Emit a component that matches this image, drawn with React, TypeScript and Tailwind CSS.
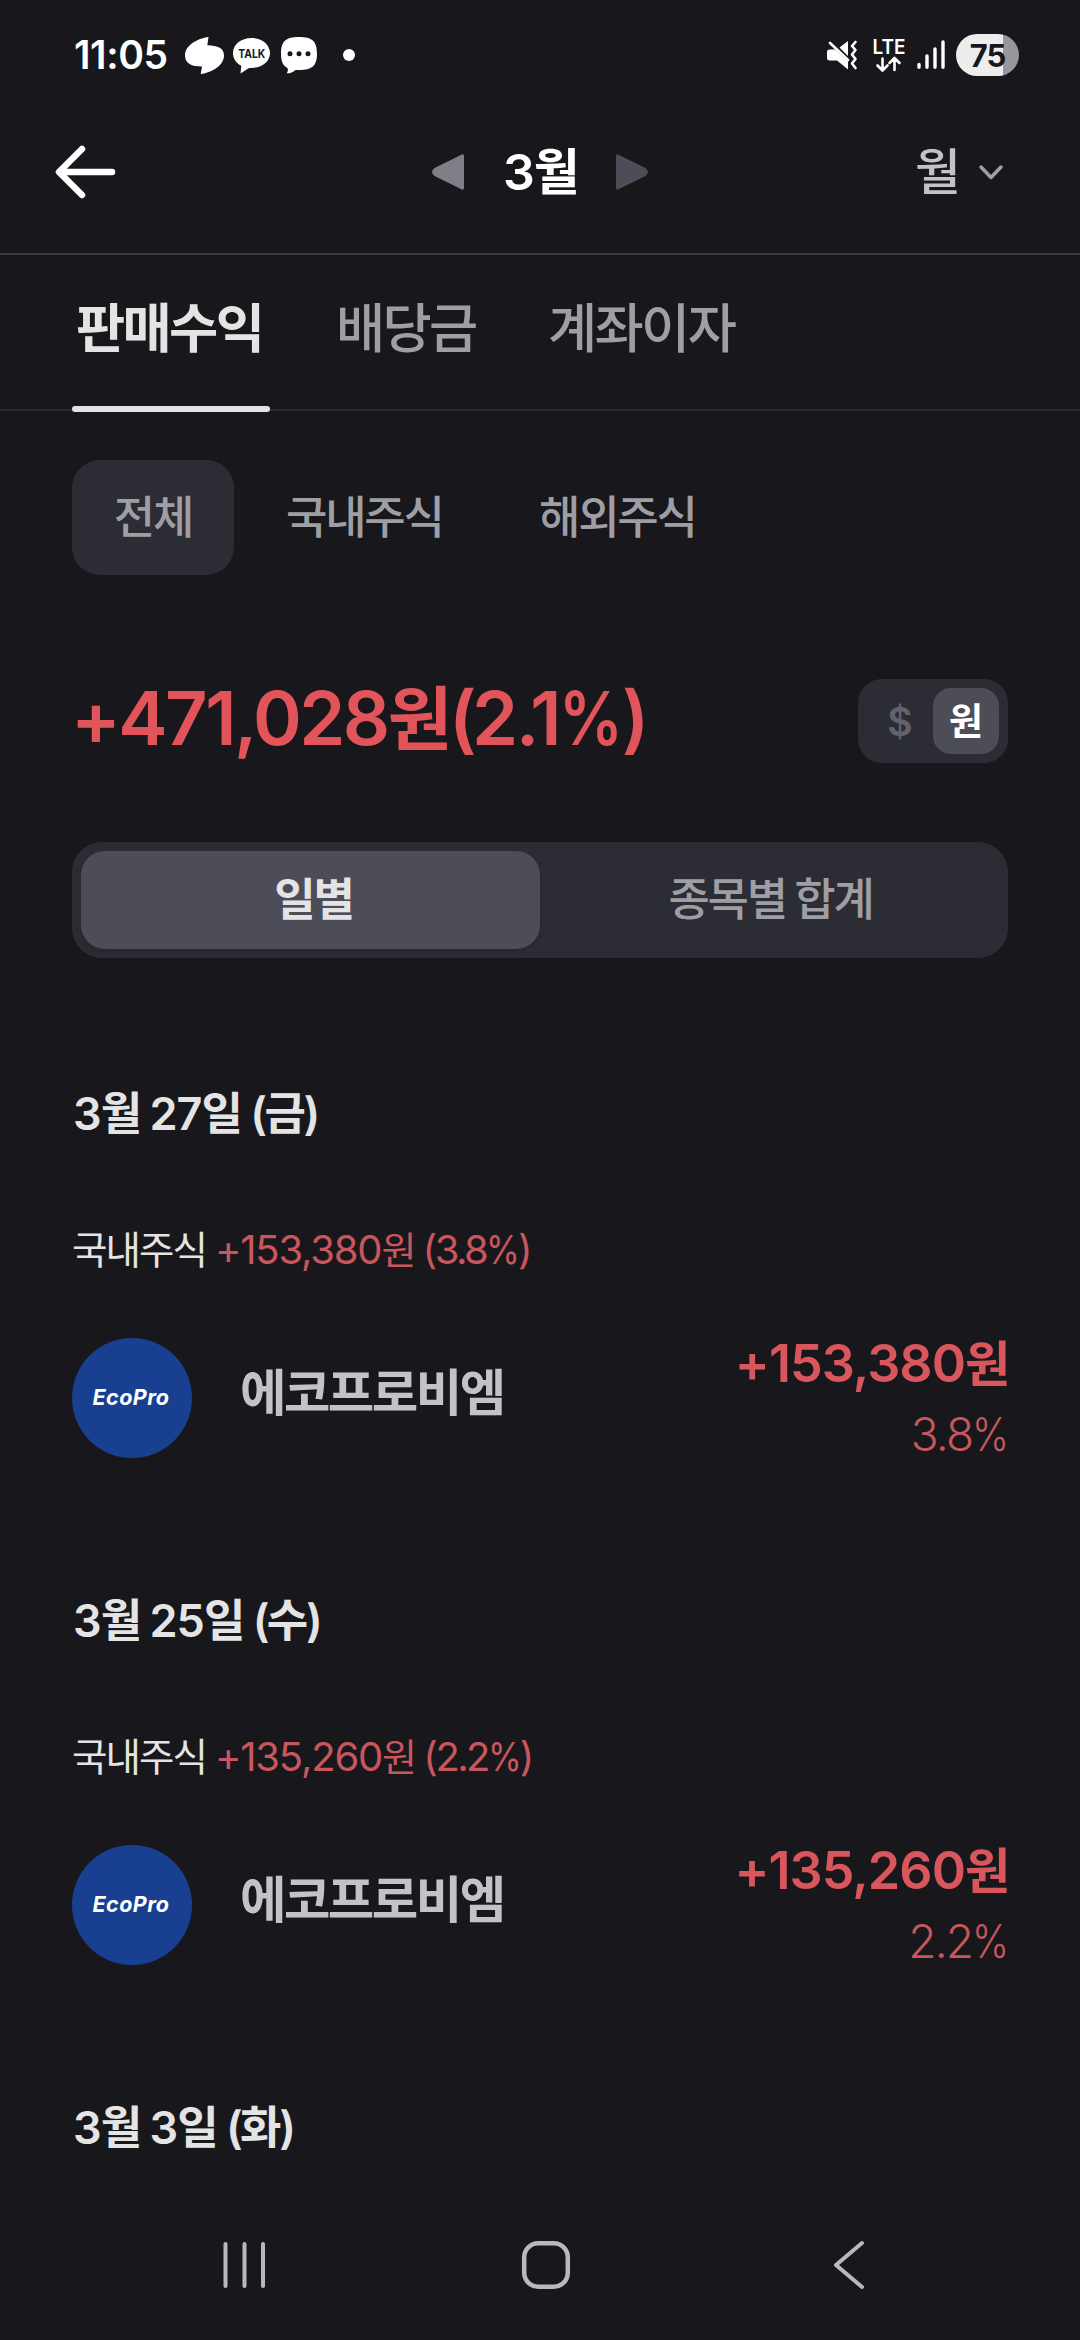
import React from 'react';

const RUNS = /([\uAC00-\uD7A3]+|[()%])/;
const HANGUL = /^[\uAC00-\uD7A3]+$/;

/** Sets Hangul runs and symbols a little tighter than the digits around them. */
function Mixed({ text }: { text: string }) {
  return (
    <span className="whitespace-pre">
      {text.split(RUNS).map((part, i) => {
        if (part === '원') {
          return (
            <span key={i} className="text-[0.95em] tracking-[-0.05em]">
              원
            </span>
          );
        }
        if (HANGUL.test(part)) {
          return (
            <span key={i} className="tracking-[-0.05em]">
              {part}
            </span>
          );
        }
        if (part === '%') {
          return (
            <span key={i} className="-mr-[0.12em] inline-block origin-left scale-x-[0.86]">
              %
            </span>
          );
        }
        if (part === '(' || part === ')') {
          return (
            <span key={i} className="tracking-[-0.06em]">
              {part}
            </span>
          );
        }
        return <React.Fragment key={i}>{part}</React.Fragment>;
      })}
    </span>
  );
}

function StatusBar() {
  return (
    <div className="flex h-[110px] shrink-0 items-start pl-[74px] pr-[61px] text-white">
      <div className="mt-[31px] w-[111px] text-[39px] leading-[48px] font-semibold tracking-[-0.01em]">11:05</div>
      <svg className="mt-[37px] h-[37px] w-[39px]" viewBox="0 0 39 37" fill="currentColor">
        <path d="M23.500 0C12 1.500 0 8.500 0 18.500 0 26.500 6.500 29.500 17 29.500L15.700 37C27.500 35.500 39 28 39 18.500 39 11 33 8.700 22.300 8.300Z" />
      </svg>
      <svg className="mt-[38px] ml-[9px] h-[36px] w-[37px]" viewBox="0 0 37 36">
        <path fill="#fff" d="M18.500 0C29 0 37 6.500 37 15S29 30 18.500 30L16 29.900 7.500 35.500 8.300 27.700C3 25.200 0 20.500 0 15 0 6.500 8 0 18.500 0Z" />
        <text x="18.700" y="19.800" textAnchor="middle" textLength="27" lengthAdjust="spacingAndGlyphs" fontSize="12" fontWeight="700" fontFamily="Inter, sans-serif" fill="#18181c">
          TALK
        </text>
      </svg>
      <svg className="mt-[37px] ml-[11px] h-[37px] w-[36px]" viewBox="0 0 36 37">
        <path fill="#fff" d="M18 0C31 0 36 4 36 16.500S31 33 18 33H14.500C12 35.500 9.500 36.300 5.700 36.300 7 34.500 7.200 33 6.500 31 1.800 28.700 0 24 0 16.500 0 4 5 0 18 0Z" />
        <g fill="#18181c">
          <circle cx="9" cy="16.800" r="2.500" />
          <circle cx="18" cy="16.800" r="2.500" />
          <circle cx="27" cy="16.800" r="2.500" />
        </g>
      </svg>
      <div className="mt-[49px] ml-[26px] size-3 rounded-full bg-white" />

      <svg className="mt-[40px] ml-auto h-[30px] w-[31px]" viewBox="0 0 31 30">
        <path fill="#fff" d="M2.500 9.500H8L21 21.500V29.500L10 20.500H2.500Q0 20.500 0 18V12Q0 9.500 2.500 9.500ZM12.500 7.500 21 1V16Z" />
        <path fill="none" stroke="#fff" strokeWidth="2.600" strokeLinecap="round" d="M3 3 21 20" />
        <path fill="none" stroke="#fff" strokeWidth="2.600" strokeLinecap="round" strokeLinejoin="round" d="M28.500 2 25 6 28.500 10 25 14.500 28.500 19 25 23.500 28.500 28" />
      </svg>
      <svg className="mt-[30px] ml-[12px] h-[44px] w-[38px]" viewBox="0 0 38 44">
        <text x="19" y="24" textAnchor="middle" textLength="33" lengthAdjust="spacingAndGlyphs" fontSize="20.500" fontWeight="600" fontFamily="Inter, sans-serif" fill="#fff">
          LTE
        </text>
        <path fill="none" stroke="#fff" strokeWidth="2.600" strokeLinecap="round" strokeLinejoin="round" d="M12.500 28.500V40M7.500 35.500 12.500 40.500 17.500 35.500M24.500 40V28.500M19.500 33 24.500 28 29.500 33" />
      </svg>
      <svg className="mt-[40px] ml-[9px] h-[30px] w-[28px]" viewBox="0 0 28 30">
        <path fill="none" stroke="#fff" strokeWidth="3.400" strokeLinecap="round" d="M2 24.500V27.300M10 16V27.300M18 9V27.300M26 2V27.300" />
      </svg>
      <div className="mt-[34px] ml-[11px] flex h-[42px] w-[63px] items-center justify-center rounded-full bg-[linear-gradient(90deg,#ededee_75%,#97979b_75%)] text-[31px] leading-none font-bold tracking-[-0.03em] text-[#18181c]">
        75
      </div>
    </div>
  );
}

function Header() {
  return (
    <div className="flex h-[145px] shrink-0 border-b-2 border-[#3a3a43]">
      <svg className="mt-[34px] ml-[54px] h-[56px] w-[62px]" viewBox="0 0 62 56" fill="none" stroke="#fff" strokeWidth="6.500" strokeLinecap="round" strokeLinejoin="round">
        <path d="M28 5 5 28 28 51M6 28H58" />
      </svg>
      <svg className="mt-[44px] ml-[316px] h-[36px] w-[32px]" viewBox="0 0 32 36" fill="#7f7f88">
        <path d="M32 2.500V33.500Q32 37 28.500 34.800L2.500 22Q-2.500 18 2.500 14L28.500 1.200Q32 -1 32 2.500Z" />
      </svg>
      <div className="mt-[29px] ml-[39px] w-[75px] text-[50px] leading-[66px] font-semibold tracking-[-0.02em] whitespace-nowrap text-white">
        <Mixed text="3월" />
      </div>
      <svg className="mt-[44px] ml-[38px] h-[36px] w-[32px]" viewBox="0 0 32 36" fill="#4d4d57">
        <path d="M0 2.500V33.500Q0 37 3.500 34.800L29.500 22Q34.500 18 29.500 14L3.500 1.200Q0 -1 0 2.500Z" />
      </svg>
      <div className="mt-[29px] ml-[267px] w-[49px] text-[50px] leading-[66px] font-medium text-[#c3c3c6]">
        <Mixed text="월" />
      </div>
      <svg className="mt-[52px] ml-[14px] h-[20px] w-[26px]" viewBox="0 0 26 20" fill="none" stroke="#9e9ea4" strokeWidth="3.500" strokeLinecap="round" strokeLinejoin="round">
        <path d="M3 5 13 15.500 23 5" />
      </svg>
    </div>
  );
}

function Tabs() {
  return (
    <div className="flex h-[156px] shrink-0 border-b-2 border-[#2b2b32] pl-[72px] text-[53.5px] leading-[72px] font-medium whitespace-nowrap text-[#9e9ea4]">
      <div className="relative w-[198px] pt-[38px] pl-[4px] font-bold text-[#e4e4e5]">
        <Mixed text="판매수익" />
        <div className="absolute -bottom-[3px] left-0 h-[6px] w-[198px] rounded-sm bg-[#e4e4e5]" />
      </div>
      <div className="ml-[66px] w-[148px] pt-[38px]">
        <Mixed text="배당금" />
      </div>
      <div className="ml-[64px] pt-[38px]">
        <Mixed text="계좌이자" />
      </div>
    </div>
  );
}

function Filters() {
  return (
    <div className="mt-[49px] ml-[72px] flex h-[115px] shrink-0 items-center text-[45px] leading-[60px] font-medium whitespace-nowrap text-[#9e9ea4]">
      <div className="flex h-full w-[162px] items-center justify-center rounded-[28px] bg-[#2c2c35]">
        <Mixed text="전체" />
      </div>
      <div className="ml-[52px] w-[200px]">
        <Mixed text="국내주식" />
      </div>
      <div className="ml-[53px]">
        <Mixed text="해외주식" />
      </div>
    </div>
  );
}

function Summary() {
  return (
    <div className="mt-[104px] flex h-[84px] shrink-0 items-center justify-between pr-[72px] pl-[71px]">
      <div className="-mt-[5px] text-[74px] leading-[84px] font-semibold tracking-[-0.034em] whitespace-nowrap text-[#e15459]">
        <Mixed text="+471,028원(2.1%)" />
      </div>
      <div className="flex h-full w-[150px] items-center rounded-[24px] bg-[#2c2c35] pr-[9px] pl-[9px]">
        <div className="flex-1 text-center text-[39px] leading-none font-semibold text-[#62626c]">$</div>
        <div className="flex h-[66px] w-[66px] items-center justify-center rounded-[18px] bg-[#4d4d57] text-[37px] leading-none font-bold text-white">원</div>
      </div>
    </div>
  );
}

function Segmented() {
  return (
    <div className="mx-[72px] mt-[79px] flex h-[116px] shrink-0 rounded-[30px] bg-[#2c2c35] p-[9px] text-[45px] leading-[60px] whitespace-nowrap">
      <div className="flex w-1/2 items-center justify-center rounded-[24px] bg-[#4d4d57] pl-[6px] font-bold text-[#e4e4e5] shadow-md">
        <Mixed text="일별" />
      </div>
      <div className="flex w-1/2 items-center justify-center pl-[2px] font-medium [word-spacing:-0.08em] text-[#9e9ea4]">
        <Mixed text="종목별 합계" />
      </div>
    </div>
  );
}

function DateTitle({ text }: { text: string }) {
  return (
    <div className="h-[60px] shrink-0 text-[45px] leading-[60px] font-semibold tracking-[-0.02em] [word-spacing:-0.02em] whitespace-nowrap text-[#e4e4e5]">
      <Mixed text={text} />
    </div>
  );
}

type Day = { date: string; amount: string; rate: string };

const DAYS: Day[] = [
  { date: '3월 27일 (금)', amount: '+153,380원', rate: '3.8%' },
  { date: '3월 25일 (수)', amount: '+135,260원', rate: '2.2%' },
];

function DaySection({ date, amount, rate }: Day) {
  return (
    <div className="flex h-[507px] shrink-0 flex-col pr-[72px] pl-[73px]">
      <DateTitle text={date} />
      <div className="mt-[78px] -ml-px flex h-[56px] items-baseline text-[39px] leading-[56px] font-normal tracking-[-0.03em] whitespace-nowrap text-[#e4e4e5]">
        <span className="w-[143px] text-[38.5px]">
          <Mixed text="국내주식" />
        </span>
        <span className="text-[40px] tracking-[-0.03em] text-[#c9565c]">
          <Mixed text={`${amount} `} />
          <span className="-ml-[2px] tracking-[-0.065em]">
            <Mixed text={`(${rate})`} />
          </span>
        </span>
      </div>
      <div className="mt-[60px] -ml-px flex h-[120px]">
        <div className="flex size-[120px] items-center justify-center rounded-full bg-[#193f91] pr-[2px] text-[21.5px] leading-none font-bold tracking-[0.02em] text-white italic">
          EcoPro
        </div>
        <div className="mt-[21px] ml-[48px] text-[50.5px] leading-[68px] font-bold whitespace-nowrap text-[#c3c3c6]">
          <Mixed text="에코프로비엠" />
        </div>
        <div className="-mt-[7px] ml-auto text-right whitespace-nowrap">
          <div className="text-[52px] leading-[66px] font-semibold tracking-[-0.018em] text-[#d9575c]">
            <Mixed text={amount} />
          </div>
          <div className="mt-[7px] text-[46px] leading-[60px] font-light tracking-[-0.04em] text-[#c9565c]">
            <Mixed text={rate} />
          </div>
        </div>
      </div>
    </div>
  );
}

function NavBar() {
  return (
    <div className="mt-auto flex h-[150px] shrink-0 pt-[49px]">
      <svg className="ml-[221px] h-[52px] w-[48px]" viewBox="0 0 48 52" fill="none" stroke="#b9b9bb" strokeWidth="4" strokeLinecap="round">
        <path d="M4.500 5V47M23.500 5V47M42 5V47" />
      </svg>
      <svg className="ml-[251px] h-[52px] w-[52px]" viewBox="0 0 52 52" fill="none" stroke="#b9b9bb" strokeWidth="4.500">
        <rect x="4.200" y="4.200" width="43.600" height="43.600" rx="14" />
      </svg>
      <svg className="ml-[260px] h-[52px] w-[36px]" viewBox="0 0 36 52" fill="none" stroke="#b9b9bb" strokeWidth="4" strokeLinecap="round" strokeLinejoin="round">
        <path d="M30 4 4 26 30 48" />
      </svg>
    </div>
  );
}

export default function App() {
  return (
    <div className="flex h-[2340px] w-[1080px] flex-col overflow-hidden bg-[#18181c] font-['Inter','Noto_Sans_CJK_KR',sans-serif]">
      <StatusBar />
      <Header />
      <Tabs />
      <Filters />
      <Summary />
      <Segmented />
      <div className="mt-[126px]">
        {DAYS.map((day) => (
          <DaySection key={day.date} {...day} />
        ))}
        <div className="pl-[73px]">
          <DateTitle text="3월 3일 (화)" />
        </div>
      </div>
      <NavBar />
    </div>
  );
}
